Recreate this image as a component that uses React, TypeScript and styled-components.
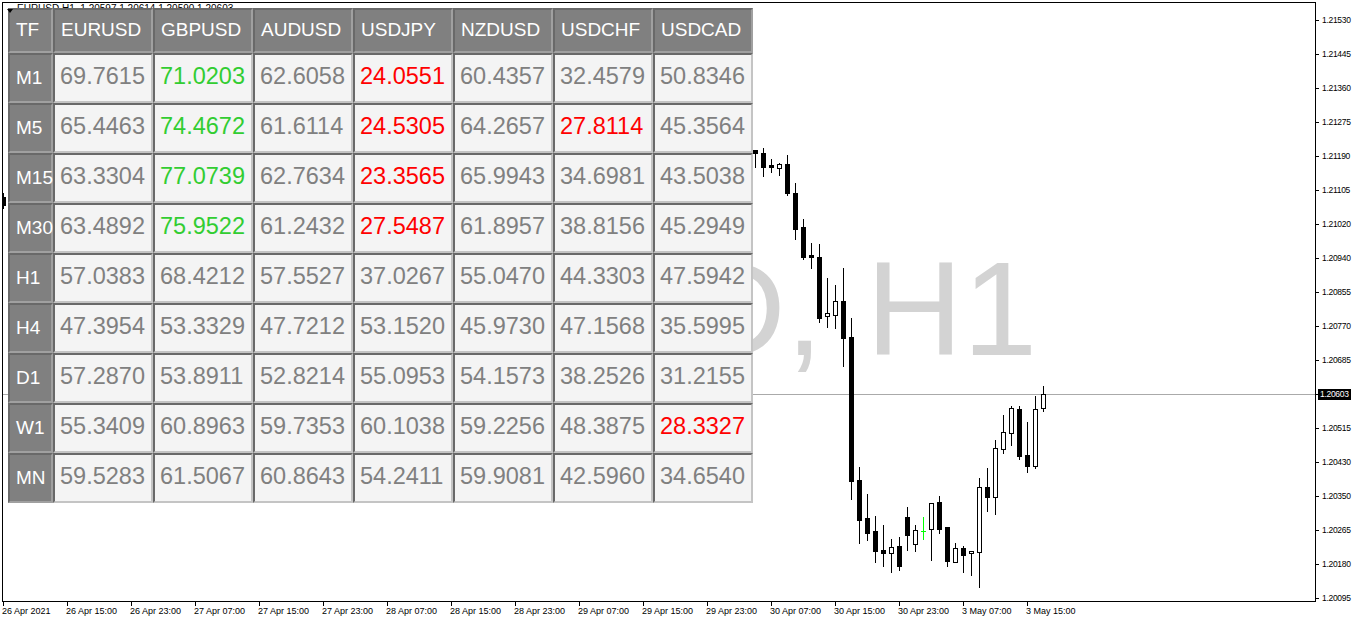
import styled, { createGlobalStyle } from 'styled-components'

const GlobalStyle = createGlobalStyle`
  html, body {
    margin: 0;
    padding: 0;
    background: #fff;
  }
  body {
    font-family: 'Liberation Sans', Arial, sans-serif;
  }
`

const Terminal = styled.div`
  width: 1362px;
  height: 622px;
  box-sizing: border-box;
  padding: 2px 0 0 2px;
  display: grid;
  grid-template-columns: 1314px 1fr;
  grid-template-rows: 600px 1fr;
  background: #fff;
  overflow: hidden;
`

const Chart = styled.div`
  position: relative;
  box-sizing: border-box;
  border: 1px solid #000;
  overflow: hidden;
  background: #fff;
`

const Title = styled.div`
  padding: 0 0 0 14px;
  font-size: 10px;
  line-height: 12px;
  color: #000;
  white-space: nowrap;
`

const Watermark = styled.div`
  position: absolute;
  left: 217px;
  top: 239px;
  font-size: 134px;
  line-height: 1;
  color: #d3d3d3;
  white-space: nowrap;
`

const WatermarkComma = styled.span`
  margin-right: 43px;
`

const Plot = styled.svg`
  position: absolute;
  inset: 0;
  width: 1312px;
  height: 598px;
`

const TradeArrow = styled.div`
  position: absolute;
  left: 4px;
  top: 6px;
  width: 0;
  height: 0;
  border-left: 3px solid transparent;
  border-right: 3px solid transparent;
  border-top: 4px solid #000;
  z-index: 2;
`

const Table = styled.div`
  position: absolute;
  top: 5px;
  left: 5px;
  display: grid;
  grid-template-columns: 45px repeat(7, 100px);
  grid-template-rows: 45px;
  grid-auto-rows: 50px;
`

type Tone = 'plain' | 'high' | 'low'

const toneColor: Record<Tone, string> = {
  plain: '#808080',
  high: '#32cd32',
  low: '#ff0000',
}

const HeadCell = styled.div`
  box-sizing: border-box;
  display: flex;
  align-items: center;
  padding: 0 0 1px 6px;
  border-style: solid;
  border-width: 2px;
  border-color: #696969 #a0a0a0 #a0a0a0 #696969;
  background: #808080;
  color: #fff;
  font-size: 19px;
  white-space: nowrap;
`

const ValueCell = styled.div<{ $tone: Tone }>`
  box-sizing: border-box;
  display: flex;
  align-items: center;
  padding: 0 0 3px 5px;
  border-style: solid;
  border-width: 2px;
  border-color: #696969 #c4c4c4 #c4c4c4 #696969;
  background: #f4f4f4;
  color: ${p => toneColor[p.$tone]};
  font-size: 23.5px;
  white-space: nowrap;
`

const PriceAxis = styled.div`
  grid-column: 2;
  grid-row: 1 / span 2;
  display: flex;
  flex-direction: column;
  padding-top: 1px;
`

const PriceLabel = styled.div`
  position: relative;
  height: 34px;
  flex: none;
  display: flex;
  align-items: center;
  padding-left: 6px;
  font-size: 8.5px;
  letter-spacing: -0.3px;
  color: #000;

  &::before {
    content: '';
    position: absolute;
    left: 0;
    top: 50%;
    width: 3px;
    height: 1px;
    background: #000;
  }
`

const PriceMarker = styled.span`
  margin-left: -4px;
  padding: 0 2px;
  height: 11px;
  line-height: 11px;
  background: #000;
  color: #fff;
`

const TimeAxis = styled.div`
  grid-column: 1;
  grid-row: 2;
  display: flex;
`

const TimeLabel = styled.div`
  position: relative;
  width: 64px;
  flex: none;
  padding-top: 4px;
  font-size: 9px;
  line-height: 11px;
  color: #000;
  white-space: nowrap;

  &::before {
    content: '';
    position: absolute;
    left: 1px;
    top: 0;
    width: 1px;
    height: 4px;
    background: #000;
  }
`

const pairs = ['EURUSD', 'GBPUSD', 'AUDUSD', 'USDJPY', 'NZDUSD', 'USDCHF', 'USDCAD']

const rsi: [string, string[]][] = [
  ['M1', ['69.7615', '71.0203', '62.6058', '24.0551', '60.4357', '32.4579', '50.8346']],
  ['M5', ['65.4463', '74.4672', '61.6114', '24.5305', '64.2657', '27.8114', '45.3564']],
  ['M15', ['63.3304', '77.0739', '62.7634', '23.3565', '65.9943', '34.6981', '43.5038']],
  ['M30', ['63.4892', '75.9522', '61.2432', '27.5487', '61.8957', '38.8156', '45.2949']],
  ['H1', ['57.0383', '68.4212', '57.5527', '37.0267', '55.0470', '44.3303', '47.5942']],
  ['H4', ['47.3954', '53.3329', '47.7212', '53.1520', '45.9730', '47.1568', '35.5995']],
  ['D1', ['57.2870', '53.8911', '52.8214', '55.0953', '54.1573', '38.2526', '31.2155']],
  ['W1', ['55.3409', '60.8963', '59.7353', '60.1038', '59.2256', '48.3875', '28.3327']],
  ['MN', ['59.5283', '61.5067', '60.8643', '54.2411', '59.9081', '42.5960', '34.6540']],
]

const toneOf = (v: string): Tone => (+v > 70 ? 'high' : +v < 30 ? 'low' : 'plain')

const prices = [
  '1.21530', '1.21445', '1.21360', '1.21275', '1.21190', '1.21105',
  '1.21020', '1.20940', '1.20855', '1.20770', '1.20685', 'bid',
  '1.20515', '1.20430', '1.20350', '1.20265', '1.20180', '1.20095',
]

const times = [
  '26 Apr 2021', '26 Apr 15:00', '26 Apr 23:00', '27 Apr 07:00', '27 Apr 15:00',
  '27 Apr 23:00', '28 Apr 07:00', '28 Apr 15:00', '28 Apr 23:00', '29 Apr 07:00',
  '29 Apr 15:00', '29 Apr 23:00', '30 Apr 07:00', '30 Apr 15:00', '30 Apr 23:00',
  '3 May 07:00', '3 May 15:00',
]

// x, high, body top, body bottom, low, kind (b = bear, w = bull, d = doji)
const candles: [number, number, number, number, number, 'b' | 'w' | 'd'][] = [
  [3, 193, 197, 205, 208, 'b'],
  [755, 150, 150, 153, 167, 'b'],
  [763, 148, 153, 167, 176, 'b'],
  [771, 159, 165, 167, 172, 'b'],
  [779, 163, 164, 168, 175, 'w'],
  [787, 155, 164, 193, 195, 'b'],
  [795, 183, 193, 229, 239, 'b'],
  [803, 219, 227, 257, 259, 'b'],
  [811, 243, 255, 257, 268, 'b'],
  [819, 244, 257, 318, 322, 'b'],
  [827, 278, 313, 316, 327, 'w'],
  [835, 285, 301, 315, 328, 'w'],
  [843, 268, 301, 338, 366, 'b'],
  [851, 318, 337, 481, 499, 'b'],
  [859, 467, 480, 520, 543, 'b'],
  [867, 494, 518, 533, 540, 'b'],
  [875, 516, 531, 551, 562, 'b'],
  [883, 525, 550, 553, 566, 'b'],
  [891, 539, 547, 553, 572, 'w'],
  [899, 537, 546, 566, 570, 'b'],
  [907, 507, 517, 535, 550, 'b'],
  [915, 525, 530, 544, 551, 'w'],
  [923, 517, 531, 531, 539, 'd'],
  [931, 503, 503, 529, 560, 'w'],
  [939, 496, 502, 529, 533, 'b'],
  [947, 527, 527, 561, 566, 'b'],
  [955, 543, 548, 562, 562, 'w'],
  [963, 546, 548, 555, 572, 'b'],
  [971, 551, 551, 553, 575, 'w'],
  [979, 478, 487, 552, 587, 'w'],
  [987, 468, 487, 497, 511, 'b'],
  [995, 440, 448, 497, 514, 'w'],
  [1003, 415, 432, 449, 453, 'w'],
  [1011, 406, 408, 433, 445, 'w'],
  [1019, 406, 409, 456, 459, 'b'],
  [1027, 422, 455, 466, 472, 'b'],
  [1035, 396, 409, 466, 468, 'w'],
  [1043, 386, 394, 408, 411, 'w'],
]

const Candle = ({ c }: { c: (typeof candles)[number] }) => {
  const [x, hi, top, bot, lo, kind] = c
  const ink = kind === 'd' ? '#00ff00' : '#000'
  return (
    <g>
      <rect x={x} y={hi} width={1} height={lo - hi + 1} fill={ink} />
      {kind === 'b' && <rect x={x - 2} y={top} width={5} height={bot - top + 1} fill="#000" />}
      {kind === 'w' && (
        <rect x={x - 1.5} y={top + 0.5} width={4} height={bot - top} fill="#fff" stroke="#000" strokeWidth={1} />
      )}
      {kind === 'd' && <rect x={x - 2} y={top} width={5} height={1} fill={ink} />}
    </g>
  )
}

export default function App() {
  return (
    <>
      <GlobalStyle />
      <Terminal>
        <Chart>
          <Title>EURUSD,H1&nbsp;&nbsp;1.20597 1.20614 1.20590 1.20603</Title>
          <Watermark>
            EURUSD<WatermarkComma>,</WatermarkComma>H1
          </Watermark>
          <Plot viewBox="3 3 1312 598" shapeRendering="crispEdges">
            <rect x={3} y={394} width={1312} height={1} fill="#aaaaaa" />
            {candles.map(c => (
              <Candle key={c[0]} c={c} />
            ))}
          </Plot>
          <Table>
            <HeadCell>TF</HeadCell>
            {pairs.map(p => (
              <HeadCell key={p}>{p}</HeadCell>
            ))}
            {rsi.map(([tf, values]) => (
              <>
                <HeadCell key={tf}>{tf}</HeadCell>
                {values.map((v, i) => (
                  <ValueCell key={tf + i} $tone={toneOf(v)}>
                    {v}
                  </ValueCell>
                ))}
              </>
            ))}
          </Table>
          <TradeArrow />
        </Chart>
        <PriceAxis>
          {prices.map(p => (
            <PriceLabel key={p}>{p === 'bid' ? <PriceMarker>1.20603</PriceMarker> : p}</PriceLabel>
          ))}
        </PriceAxis>
        <TimeAxis>
          {times.map(t => (
            <TimeLabel key={t}>{t}</TimeLabel>
          ))}
        </TimeAxis>
      </Terminal>
    </>
  )
}
